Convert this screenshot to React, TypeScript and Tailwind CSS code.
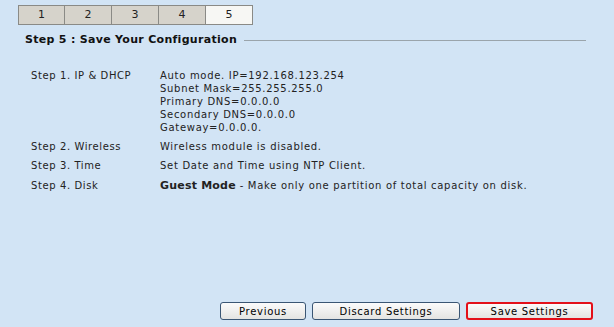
const steps = [
  {
    label: "Step 1. IP & DHCP",
    lines: [
      "Auto mode. IP=192.168.123.254",
      "Subnet Mask=255.255.255.0",
      "Primary DNS=0.0.0.0",
      "Secondary DNS=0.0.0.0",
      "Gateway=0.0.0.0.",
    ],
  },
  { label: "Step 2. Wireless", lines: ["Wireless module is disabled."] },
  { label: "Step 3. Time", lines: ["Set Date and Time using NTP Client."] },
];

const tabs = ["1", "2", "3", "4", "5"];

const Button = ({ text, width, active }: { text: string; width: string; active?: boolean }) => (
  <div
    className={`${width} h-[18px] flex items-center justify-center rounded-[3px] bg-gradient-to-b from-[#fbfbfb] to-[#e4e4e2] text-[10px] tracking-[0.7px] text-black ${
      active ? "border-2 border-[#e3101a]" : "border border-[#3a5674]"
    }`}
  >
    {text}
  </div>
);

export default function App() {
  return (
    <div
      className="w-[614px] h-[327px] bg-[#d2e4f5] flex flex-col text-[#222]"
      style={{ fontFamily: "'DejaVu Sans', Verdana, sans-serif" }}
    >
      <div className="flex ml-[18px] mt-[5px]">
        {tabs.map((t) => (
          <div
            key={t}
            className={`w-[47px] h-[20px] flex items-center justify-center text-[11px] border-y border-r border-[#8a8a86] first:border-l ${
              t === "5" ? "bg-[#f7f7f4]" : "bg-[#d6d3cb]"
            }`}
          >
            {t}
          </div>
        ))}
      </div>

      <div className="flex items-center ml-[25px] mr-[28px] mt-[7px] h-[16px]">
        <span className="text-[11px] font-bold tracking-[0.3px] text-[#111] whitespace-nowrap">
          Step 5 : Save Your Configuration
        </span>
        <div className="flex-1 ml-[7px] h-px bg-[#9aa4ab]" />
      </div>

      <div className="ml-[31px] mt-[21px] text-[10px] leading-[13px]">
        {steps.map((s, i) => (
          <div key={s.label} className={`flex ${i > 0 ? "mt-[6px]" : ""}`}>
            <div className="w-[129px] shrink-0 tracking-[0.6px]">{s.label}</div>
            <div className="tracking-[0.7px]">
              {s.lines.map((l) => (
                <div key={l}>{l}</div>
              ))}
            </div>
          </div>
        ))}
        <div className="flex mt-[7px]">
          <div className="w-[129px] shrink-0 tracking-[0.6px]">Step 4. Disk</div>
          <div className="tracking-[0.7px]">
            <span className="font-bold text-[11px] tracking-[0.2px]">Guest Mode</span> - Make only one partition of total capacity on disk.
          </div>
        </div>
      </div>

      <div className="flex-1" />

      <div className="flex justify-end gap-[6px] mr-[21px] mb-[7px]">
        <Button text="Previous" width="w-[86px]" />
        <Button text="Discard Settings" width="w-[148px]" />
        <Button text="Save Settings" width="w-[127px]" active />
      </div>
    </div>
  );
}
